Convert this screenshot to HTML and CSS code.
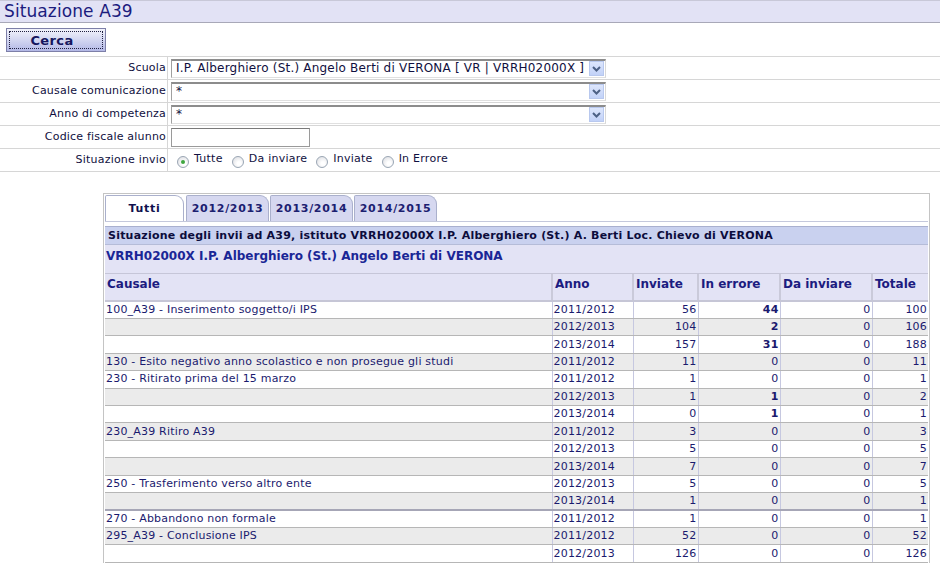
FILE: index.html
```html
<!DOCTYPE html>
<html lang="it">
<head>
<meta charset="utf-8">
<title>Situazione A39</title>
<link rel="stylesheet" href="styles.css">
</head>
<body>
<div class="title">Situazione A39</div>
<div class="toolbar">
  <button class="btn"><span class="btn-focus">Cerca</span></button>
</div>
<div class="form">
  <div class="frow">
    <div class="flabel">Scuola</div>
    <div class="fval">
      <div class="select sel-wide"><span class="sel-text">I.P. Alberghiero (St.) Angelo Berti di VERONA [ VR | VRRH02000X ]</span><span class="arrow"><svg width="9" height="6" viewBox="0 0 9 6"><path d="M1 1 L4.5 4.5 L8 1" fill="none" stroke="#4d6185" stroke-width="2"/></svg></span></div>
    </div>
  </div>
  <div class="frow">
    <div class="flabel">Causale comunicazione</div>
    <div class="fval">
      <div class="select sel-wide"><span class="sel-text">*</span><span class="arrow"><svg width="9" height="6" viewBox="0 0 9 6"><path d="M1 1 L4.5 4.5 L8 1" fill="none" stroke="#4d6185" stroke-width="2"/></svg></span></div>
    </div>
  </div>
  <div class="frow">
    <div class="flabel">Anno di competenza</div>
    <div class="fval">
      <div class="select sel-wide"><span class="sel-text">*</span><span class="arrow"><svg width="9" height="6" viewBox="0 0 9 6"><path d="M1 1 L4.5 4.5 L8 1" fill="none" stroke="#4d6185" stroke-width="2"/></svg></span></div>
    </div>
  </div>
  <div class="frow">
    <div class="flabel">Codice fiscale alunno</div>
    <div class="fval">
      <div class="textbox"></div>
    </div>
  </div>
  <div class="frow">
    <div class="flabel">Situazione invio</div>
    <div class="fval radios">
      <span class="radio checked"></span><span class="rlabel">Tutte</span>
      <span class="radio"></span><span class="rlabel">Da inviare</span>
      <span class="radio"></span><span class="rlabel">Inviate</span>
      <span class="radio"></span><span class="rlabel">In Errore</span>
    </div>
  </div>
</div>

<div class="panel">
  <div class="tabs">
    <div class="tab active">Tutti</div>
    <div class="tab">2012/2013</div>
    <div class="tab">2013/2014</div>
    <div class="tab">2014/2015</div>
  </div>
  <div class="caption">Situazione degli invii ad A39, istituto VRRH02000X I.P. Alberghiero (St.) A. Berti Loc. Chievo di VERONA</div>
  <div class="school">VRRH02000X I.P. Alberghiero (St.) Angelo Berti di VERONA</div>
  <table class="grid">
    <colgroup>
      <col class="c-causale"><col class="c-anno"><col class="c-inv"><col class="c-err"><col class="c-da"><col class="c-tot">
    </colgroup>
    <thead>
      <tr><th>Causale</th><th>Anno</th><th>Inviate</th><th>In errore</th><th>Da inviare</th><th>Totale</th></tr>
    </thead>
    <tbody>
      <tr><td>100_A39 - Inserimento soggetto/i IPS</td><td>2011/2012</td><td class="n">56</td><td class="n b">44</td><td class="n">0</td><td class="n">100</td></tr>
      <tr class="alt"><td></td><td>2012/2013</td><td class="n">104</td><td class="n b">2</td><td class="n">0</td><td class="n">106</td></tr>
      <tr><td></td><td>2013/2014</td><td class="n">157</td><td class="n b">31</td><td class="n">0</td><td class="n">188</td></tr>
      <tr class="alt"><td>130 - Esito negativo anno scolastico e non prosegue gli studi</td><td>2011/2012</td><td class="n">11</td><td class="n">0</td><td class="n">0</td><td class="n">11</td></tr>
      <tr><td>230 - Ritirato prima del 15 marzo</td><td>2011/2012</td><td class="n">1</td><td class="n">0</td><td class="n">0</td><td class="n">1</td></tr>
      <tr class="alt"><td></td><td>2012/2013</td><td class="n">1</td><td class="n b">1</td><td class="n">0</td><td class="n">2</td></tr>
      <tr><td></td><td>2013/2014</td><td class="n">0</td><td class="n b">1</td><td class="n">0</td><td class="n">1</td></tr>
      <tr class="alt"><td>230_A39 Ritiro A39</td><td>2011/2012</td><td class="n">3</td><td class="n">0</td><td class="n">0</td><td class="n">3</td></tr>
      <tr><td></td><td>2012/2013</td><td class="n">5</td><td class="n">0</td><td class="n">0</td><td class="n">5</td></tr>
      <tr class="alt"><td></td><td>2013/2014</td><td class="n">7</td><td class="n">0</td><td class="n">0</td><td class="n">7</td></tr>
      <tr><td>250 - Trasferimento verso altro ente</td><td>2012/2013</td><td class="n">5</td><td class="n">0</td><td class="n">0</td><td class="n">5</td></tr>
      <tr class="alt thick"><td></td><td>2013/2014</td><td class="n">1</td><td class="n">0</td><td class="n">0</td><td class="n">1</td></tr>
      <tr><td>270 - Abbandono non formale</td><td>2011/2012</td><td class="n">1</td><td class="n">0</td><td class="n">0</td><td class="n">1</td></tr>
      <tr class="alt"><td>295_A39 - Conclusione IPS</td><td>2011/2012</td><td class="n">52</td><td class="n">0</td><td class="n">0</td><td class="n">52</td></tr>
      <tr><td></td><td>2012/2013</td><td class="n">126</td><td class="n">0</td><td class="n">0</td><td class="n">126</td></tr>
    </tbody>
  </table>
</div>
</body>
</html>
```

FILE: styles.css
```css
html, body {
  margin: 0;
  padding: 0;
  background: #ffffff;
}
body {
  font-family: "DejaVu Sans", Verdana, sans-serif;
  font-size: 11px;
  letter-spacing: 0.2px;
  color: #1a1a6e;
}

.title {
  height: 21px;
  line-height: 21px;
  border-top: 1px solid #c8c8d8;
  border-bottom: 1px solid #a8a8b8;
  background: #e2e2f5;
  color: #1c1c7e;
  font-size: 17px;
  letter-spacing: 0.1px;
  padding-left: 4px;
}

.toolbar {
  height: 33px;
  display: flex;
  align-items: flex-start;
  padding: 5px 0 0 6px;
  box-sizing: border-box;
}
.btn {
  width: 100px;
  height: 24px;
  padding: 2px;
  border: 1px solid #7d7fa8;
  background: linear-gradient(#f2f3fb, #d6d9f2 45%, #b3b8e6);
  font-family: "DejaVu Sans", Verdana, sans-serif;
  font-weight: bold;
  font-size: 13px;
  letter-spacing: 0.4px;
  color: #16165e;
  cursor: pointer;
}
.btn-focus {
  display: flex;
  align-items: center;
  justify-content: center;
  height: 100%;
  padding-right: 8px;
  border: 1px dotted #202040;
  box-sizing: border-box;
}

.form {
  border-top: 1px solid #d6d6d6;
}
.frow {
  display: flex;
  height: 22px;
  border-bottom: 1px solid #d6d6d6;
}
.flabel {
  width: 168px;
  flex: none;
  border-right: 1px solid #d6d6d6;
  text-align: right;
  padding-right: 1px;
  box-sizing: border-box;
  line-height: 21px;
  color: #101040;
}
.fval {
  display: flex;
  align-items: center;
  padding-left: 3px;
  flex: 1;
}

.select {
  height: 19px;
  box-sizing: border-box;
  border-top: 2px solid #8c8c8c;
  border-left: 1px solid #a0a0a0;
  border-right: 1px solid #d8d8d8;
  border-bottom: 1px solid #e0e0e0;
  display: flex;
  align-items: center;
  justify-content: space-between;
  background: #fff;
  padding-left: 4px;
  color: #101040;
}
.sel-wide {
  width: 435px;
}
.sel-text {
  white-space: nowrap;
  line-height: 15px;
  font-size: 12px;
  letter-spacing: 0.2px;
}
.arrow {
  width: 15px;
  height: 15px;
  margin-right: 1px;
  box-sizing: border-box;
  border: 1px solid #b8c8ee;
  background: linear-gradient(#dde6fc, #c2d2f8);
  display: flex;
  align-items: center;
  justify-content: center;
}

.textbox {
  width: 139px;
  height: 19px;
  box-sizing: border-box;
  border: 1px solid #9a9a9a;
  border-top-color: #7a7a7a;
  background: #fff;
}

.radios {
  padding-left: 9px;
  align-items: center;
}
.radio {
  width: 12px;
  height: 12px;
  border-radius: 50%;
  border: 1px solid #9aa6b4;
  box-sizing: border-box;
  background: radial-gradient(circle at 60% 65%, #ffffff 20%, #dcdde2 90%);
  position: relative;
  margin-top: 3px;
  flex: none;
}
.radio.checked::after {
  content: "";
  position: absolute;
  left: 3px;
  top: 3px;
  width: 4px;
  height: 4px;
  border-radius: 50%;
  background: #3fa63f;
}
.rlabel {
  margin-left: 5px;
  margin-right: 9px;
  color: #101040;
  margin-top: -4px;
  letter-spacing: 0.25px;
}

.panel {
  margin: 21px 0 0 103px;
  width: 827px;
  box-sizing: border-box;
  border: 1px solid #c4c4c4;
  border-bottom: none;
  padding: 1px 1px 0 1px;
}
.tabs {
  display: flex;
  gap: 1px;
  height: 27px;
  border-bottom: 1px solid #c4c8dc;
  box-sizing: border-box;
  padding-left: 0;
}
.tab {
  width: 83px;
  height: 26px;
  box-sizing: border-box;
  border: 1px solid #aab0cc;
  border-bottom: none;
  border-radius: 2px 9px 0 0;
  background: #d6d8f0;
  font-weight: bold;
  color: #1c2070;
  text-align: center;
  line-height: 25px;
  font-size: 11px;
  letter-spacing: 0.7px;
}
.tab.active {
  width: 79px;
  margin-right: 1px;
  background: #ffffff;
  color: #10104e;
}

.caption {
  margin-top: 4px;
  height: 19px;
  box-sizing: border-box;
  background: #c9d1ef;
  border-top: 1px solid #a9b0cf;
  border-bottom: 1px solid #b5bcd8;
  font-weight: bold;
  color: #0c0c3c;
  line-height: 17px;
  padding-left: 3px;
  white-space: nowrap;
  letter-spacing: 0.22px;
}
.school {
  height: 29px;
  box-sizing: border-box;
  background: #e3e3f5;
  font-weight: bold;
  font-size: 12px;
  letter-spacing: 0;
  color: #1a2696;
  padding: 4px 0 0 1px;
  border-bottom: 1px solid #c6c6d8;
}

.grid {
  width: 100%;
  border-collapse: collapse;
  table-layout: fixed;
}
.c-causale { width: 447px; }
.c-anno { width: 81px; }
.c-inv { width: 65px; }
.c-err { width: 82px; }
.c-da { width: 92px; }
.c-tot { width: auto; }

.grid th {
  height: 27px;
  box-sizing: border-box;
  background: #e3e3f5;
  text-align: left;
  vertical-align: top;
  padding: 3px 0 0 2px;
  font-size: 12px;
  font-weight: bold;
  letter-spacing: 0;
  color: #1c1c80;
  border-right: 2px solid #cacada;
  border-bottom: 2px solid #c6c6d6;
}
.grid th:last-child { border-right: none; }
.grid tbody tr { height: 17.43px; }
.grid td {
  padding: 0 1px;
  white-space: nowrap;
  overflow: hidden;
  border-right: 1px solid #c6c8e0;
  border-bottom: 1px solid #b6b6b6;
  color: #1a1a6e;
  line-height: 14px;
}
.grid td:last-child { border-right: none; }
.grid tr.alt td { background: #ebebeb; }
.grid tr.thick td { border-bottom: 2px solid #a6a6b6; }
.grid td.n { text-align: right; padding-right: 1px; }
.grid td.b { font-weight: bold; }
```
